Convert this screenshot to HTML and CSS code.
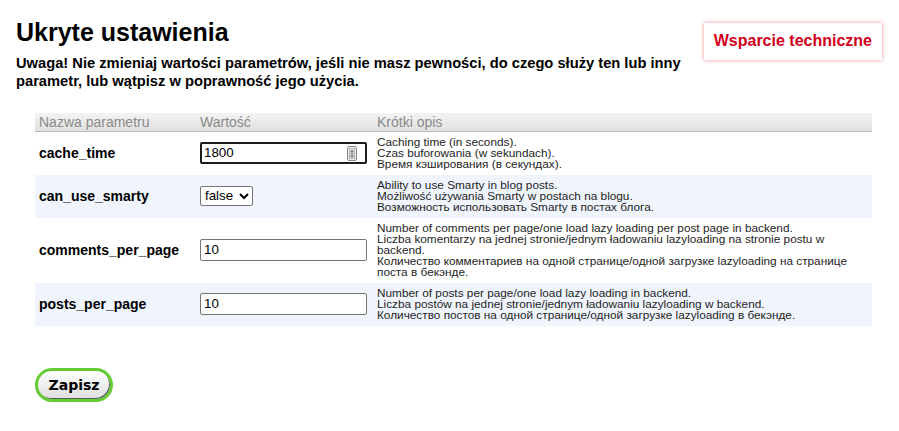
FILE: index.html
```html
<!DOCTYPE html>
<html lang="pl">
<head>
    <meta charset="UTF-8">
    <meta name="viewport" content="width=device-width, initial-scale=1.0">
    <title>Ukryte ustawienia</title>
    <link rel="stylesheet" href="styles.css">
</head>
<body>

    <div class="page">
        <div class="top">
            <div class="intro">
                <h1>Ukryte ustawienia</h1>
                <p class="warning">Uwaga! Nie zmieniaj wartości parametrów, jeśli nie masz pewności, do czego służy ten lub inny parametr, lub wątpisz w poprawność jego użycia.</p>
            </div>
            <a href="#" class="support-btn">Wsparcie techniczne</a>
        </div>

        <form class="settings-form">
            <table class="settings">
                <colgroup>
                    <col class="col-name">
                    <col class="col-value">
                    <col>
                </colgroup>
                <thead>
                    <tr>
                        <th>Nazwa parametru</th>
                        <th>Wartość</th>
                        <th>Krótki opis</th>
                    </tr>
                </thead>
                <tbody>
                    <tr>
                        <td class="name">cache_time</td>
                        <td class="value">
                            <span class="field-wrap">
                                <input type="text" class="field focused" value="1800">
                                <!-- spin icon -->
                                <svg class="spin" width="10" height="15" viewBox="0 0 10 15">
                                    <rect x="0.5" y="0.5" width="9" height="14" rx="1.5" fill="#ececec" stroke="#8a8a8a"/>
                                    <rect x="2.5" y="2.5" width="5" height="10" fill="#dcdcdc" stroke="#b5b5b5"/>
                                    <path d="M5 4 L6.5 6 H3.5 Z" fill="#666"/>
                                    <rect x="4.5" y="6" width="1" height="4" fill="#666"/>
                                    <rect x="3.5" y="10" width="3" height="1" fill="#666"/>
                                </svg>
                            </span>
                        </td>
                        <td class="desc">Caching time (in seconds).<br>Czas buforowania (w sekundach).<br>Время кэширования (в секундах).</td>
                    </tr>
                    <tr class="alt">
                        <td class="name">can_use_smarty</td>
                        <td class="value">
                            <select class="choice">
                                <option>false</option>
                                <option>true</option>
                            </select>
                        </td>
                        <td class="desc">Ability to use Smarty in blog posts.<br>Możliwość używania Smarty w postach na blogu.<br>Возможность использовать Smarty в постах блога.</td>
                    </tr>
                    <tr>
                        <td class="name">comments_per_page</td>
                        <td class="value"><input type="text" class="field" value="10"></td>
                        <td class="desc">Number of comments per page/one load lazy loading per post page in backend.<br>Liczba komentarzy na jednej stronie/jednym ładowaniu lazyloading na stronie postu w backend.<br>Количество комментариев на одной странице/одной загрузке lazyloading на странице поста в бекэнде.</td>
                    </tr>
                    <tr class="alt">
                        <td class="name">posts_per_page</td>
                        <td class="value"><input type="text" class="field" value="10"></td>
                        <td class="desc">Number of posts per page/one load lazy loading in backend.<br>Liczba postów na jednej stronie/jednym ładowaniu lazyloading w backend.<br>Количество постов на одной странице/одной загрузке lazyloading в бекэнде.</td>
                    </tr>
                </tbody>
            </table>

            <button type="button" class="save-btn">Zapisz</button>
        </form>
    </div>

</body>
</html>
```

FILE: styles.css
```css
body {
    font-family: Arial, "Liberation Sans", sans-serif;
    margin: 0;
    padding: 0;
    color: #000;
    background: #fff;
}

.page {
    padding: 0 17px 0 16px;
}

/* Cabecera */
.top {
    display: flex;
    justify-content: space-between;
    align-items: flex-start;
}

.intro {
    flex: 1;
}

h1 {
    font-size: 25px;
    line-height: 29px;
    margin: 18px 0 0;
}

.warning {
    font-size: 14.7px;
    font-weight: bold;
    line-height: 18px;
    margin: 7px 0 0;
}

.support-btn {
    margin-top: 23px;
    padding: 9px 10px 10px;
    font-size: 16px;
    line-height: 18px;
    font-weight: bold;
    color: #d0001b;
    text-decoration: none;
    background: #fff;
    box-shadow: 0 0 4px rgba(220, 0, 20, 0.45);
    white-space: nowrap;
}

/* Tabla de parametros */
.settings {
    width: 837px;
    margin: 23px 0 0 19px;
    border-collapse: collapse;
    table-layout: fixed;
}

.col-name { width: 161px; }
.col-value { width: 177px; }

.settings th {
    text-align: left;
    font-weight: normal;
    font-size: 14px;
    line-height: 16px;
    color: #8a8a8a;
    padding: 1px 4px;
    background: linear-gradient(#f3f3f3, #e1e1e1);
    border-bottom: 1px solid #b9b9b9;
}

.settings td {
    padding: 4px 4px 6px;
    vertical-align: middle;
}

.settings tr.alt td {
    background: #f0f5fd;
}

.name {
    font-size: 14px;
    font-weight: bold;
}

.desc {
    font-size: 11.8px;
    line-height: 11px;
    color: #1e1e1e;
    vertical-align: top !important;
    padding-top: 5px !important;
    padding-bottom: 5px !important;
}

.field-wrap {
    position: relative;
    display: inline-block;
}

.field {
    box-sizing: border-box;
    width: 167px;
    height: 22px;
    margin: 0;
    padding: 1px 3px;
    font-family: Arial, "Liberation Sans", sans-serif;
    font-size: 13.33px;
    color: #000;
    border: 1px solid #767676;
    border-radius: 2px;
    vertical-align: middle;
}

.field.focused {
    border: 2px solid #1c1c1c;
    padding: 1px 2px;
}

.spin {
    position: absolute;
    right: 10px;
    top: 4px;
}

.choice {
    font-family: Arial, "Liberation Sans", sans-serif;
    font-size: 13.33px;
    width: 53px;
    height: 20px;
    margin: 0;
    color: #000;
    border: 1px solid #767676;
    border-radius: 2px;
    background: #fff;
    vertical-align: middle;
}

/* Boton guardar */
.save-btn {
    display: block;
    margin: 42px 0 0 19px;
    width: 78px;
    height: 34px;
    border: 3px solid #66cc33;
    border-radius: 17px;
    background: linear-gradient(#ffffff, #dedede);
    box-shadow: inset -1px -1px 0 #5a5a5a;
    font-family: "DejaVu Sans", Verdana, sans-serif;
    font-size: 14px;
    font-weight: bold;
    color: #000;
    cursor: pointer;
    padding: 0;
}
```
